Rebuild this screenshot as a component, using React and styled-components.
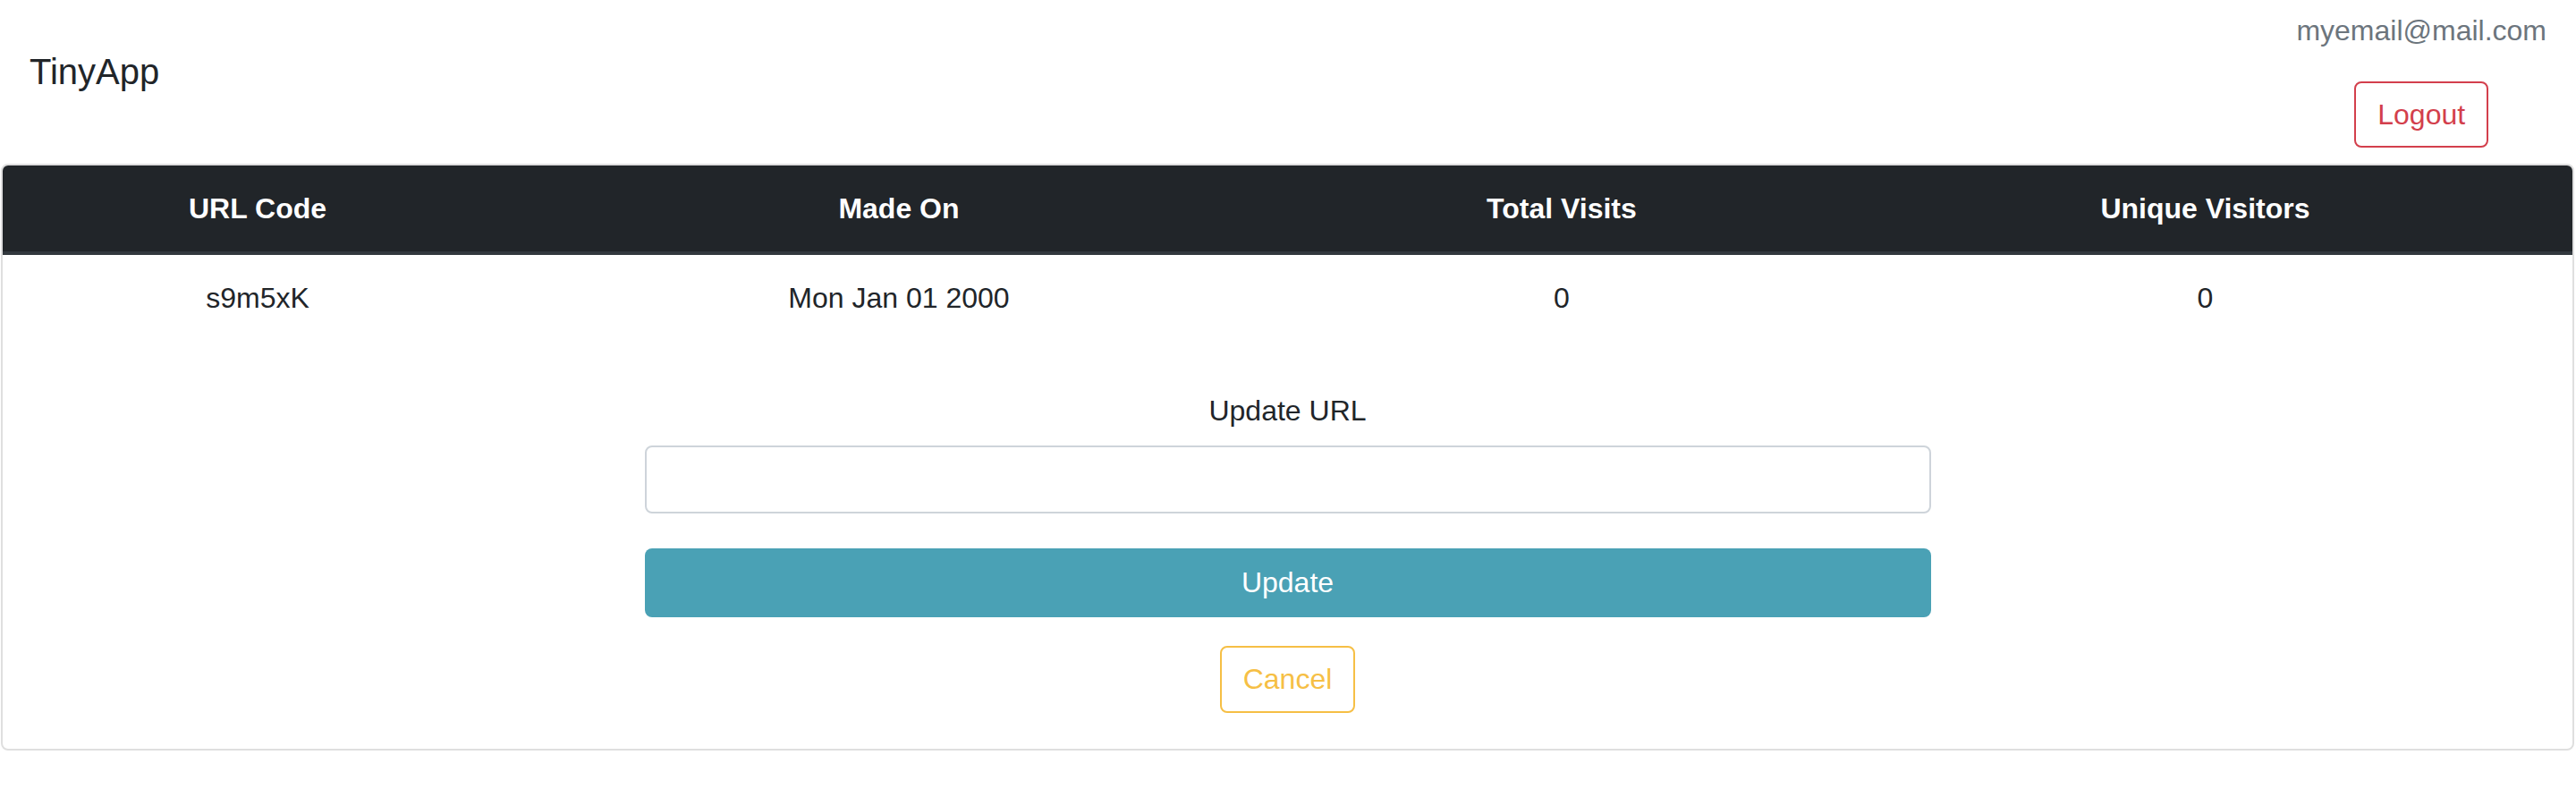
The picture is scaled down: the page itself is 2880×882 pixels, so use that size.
import styled, { createGlobalStyle } from "styled-components";

const GlobalStyle = createGlobalStyle`
  body {
    margin: 0;
    background: #fff;
    color: #212529;
    font-family: "Liberation Sans", Arial, sans-serif;
    font-size: 32px;
    line-height: 48px;
  }
  * {
    box-sizing: border-box;
  }
`;

const Navbar = styled.header`
  display: flex;
  justify-content: space-between;
  align-items: flex-start;
  height: 183px;
`;

const Brand = styled.a`
  margin: 50px 0 0 33px;
  font-size: 40px;
  line-height: 60px;
  color: #212529;
  text-decoration: none;
`;

const UserBox = styled.div`
  display: flex;
  flex-direction: column;
  align-items: center;
  gap: 33px;
  padding: 10px 33px 0 0;
`;

const Email = styled.span`
  color: #6c757d;
`;

const OutlineButton = styled.button`
  font-family: inherit;
  font-size: 32px;
  line-height: 48px;
  padding: ${({ $pad }) => $pad || "11px 24px"};
  background: transparent;
  border: 2px solid ${({ $color }) => $color};
  color: ${({ $color }) => $color};
  border-radius: 8px;
  cursor: pointer;
`;

const Card = styled.section`
  margin: 0 2px 0 1px;
  border: 2px solid #dfdfdf;
  border-radius: 8px;
  overflow: hidden;
`;

const Table = styled.table`
  width: 100%;
  border-collapse: collapse;
  table-layout: fixed;
  text-align: center;
`;

const Th = styled.th`
  width: ${({ $w }) => $w};
  padding: 24px;
  background: #212529;
  color: #fff;
  font-weight: 700;
  border-bottom: 4px solid #32383e;
`;

const Td = styled.td`
  padding: 24px;
`;

const Form = styled.form`
  width: 1438px;
  margin: 0 auto;
  padding: 54px 0 40px;
  display: flex;
  flex-direction: column;
  align-items: center;
`;

const Label = styled.label`
  margin-bottom: 15px;
`;

const Input = styled.input`
  width: 100%;
  height: 76px;
  border: 2px solid #ced4da;
  border-radius: 8px;
  font-family: inherit;
  font-size: 32px;
  padding: 0 24px;
  outline: none;
`;

const SubmitButton = styled.button`
  width: 100%;
  height: 77px;
  margin: 39px 0 32px;
  border: none;
  border-radius: 8px;
  background: #4aa1b5;
  color: #fff;
  font-family: inherit;
  font-size: 32px;
  cursor: pointer;
`;

const columns = [
  { title: "URL Code", w: "19.84%" },
  { title: "Made On", w: "30.07%" },
  { title: "Total Visits", w: "21.51%" },
  { title: "Unique Visitors", w: "28.58%" },
];

const row = ["s9m5xK", "Mon Jan 01 2000", "0", "0"];

export default function App() {
  return (
    <>
      <GlobalStyle />
      <Navbar>
        <Brand href="#">TinyApp</Brand>
        <UserBox>
          <Email>myemail@mail.com</Email>
          <OutlineButton $color="#d33f4c">Logout</OutlineButton>
        </UserBox>
      </Navbar>
      <Card>
        <Table>
          <thead>
            <tr>
              {columns.map((c) => (
                <Th key={c.title} $w={c.w}>
                  {c.title}
                </Th>
              ))}
            </tr>
          </thead>
          <tbody>
            <tr>
              {row.map((v, i) => (
                <Td key={i}>{v}</Td>
              ))}
            </tr>
          </tbody>
        </Table>
        <Form onSubmit={(e) => e.preventDefault()}>
          <Label htmlFor="longURL">Update URL</Label>
          <Input id="longURL" type="text" />
          <SubmitButton type="submit">Update</SubmitButton>
          <OutlineButton type="button" $color="#f6bf45" $pad="11px 24px 12px">
            Cancel
          </OutlineButton>
        </Form>
      </Card>
    </>
  );
}
